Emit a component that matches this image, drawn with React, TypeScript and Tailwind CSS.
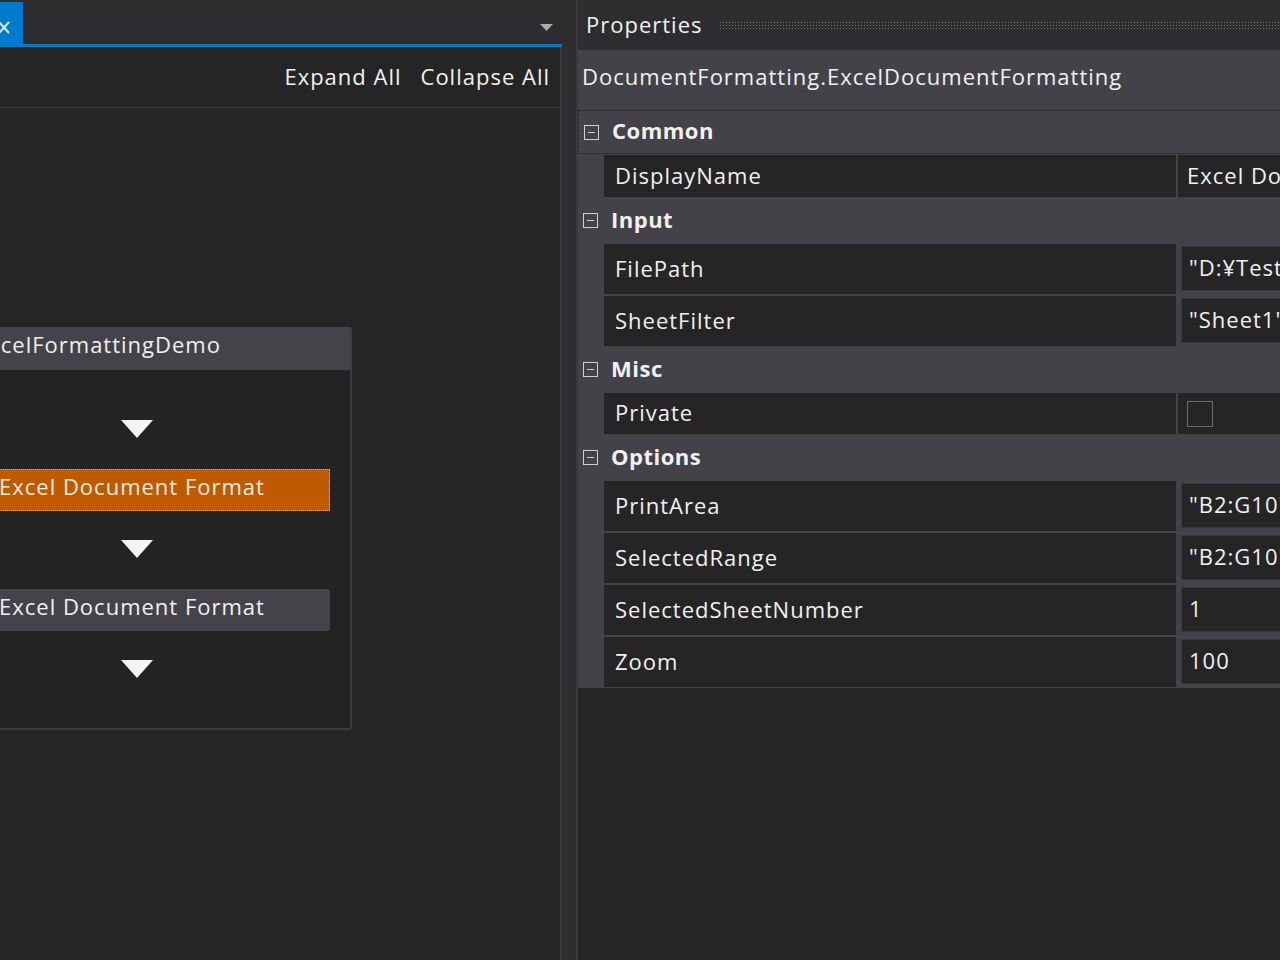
import React from 'react';

type PropKind = 'text' | 'box' | 'check';

interface PropItem {
    name: string;
    value?: string;
    kind: PropKind;
}

interface Category {
    title: string;
    focused?: boolean;
    height: string;
    props: PropItem[];
}

const categories: Category[] = [
    {
        title: 'Common',
        focused: true,
        height: 'h-[44px]',
        props: [{ name: 'DisplayName', value: 'Excel Document Formatting', kind: 'text' }],
    },
    {
        title: 'Input',
        height: 'h-[45px]',
        props: [
            { name: 'FilePath', value: '"D:¥Test¥Sample.xlsx"', kind: 'box' },
            { name: 'SheetFilter', value: '"Sheet1"', kind: 'box' },
        ],
    },
    {
        title: 'Misc',
        height: 'h-[45px]',
        props: [{ name: 'Private', kind: 'check' }],
    },
    {
        title: 'Options',
        height: 'h-[45px]',
        props: [
            { name: 'PrintArea', value: '"B2:G10"', kind: 'box' },
            { name: 'SelectedRange', value: '"B2:G10"', kind: 'box' },
            { name: 'SelectedSheetNumber', value: '1', kind: 'box' },
            { name: 'Zoom', value: '100', kind: 'box' },
        ],
    },
];

const Arrow = () => (
    <svg width="32" height="18" viewBox="0 0 32 18" className="shrink-0">
        <polygon points="0,0 32,0 16,18" fill="#f4f4f4" />
    </svg>
);

const MinusBox = () => (
    <div className="w-[15px] h-[15px] border border-[#cfcfcf] flex items-center justify-center shrink-0">
        <div className="w-[7px] h-[1px] bg-[#cfcfcf]" />
    </div>
);

const PropertyRow: React.FC<{ item: PropItem }> = ({ item }) => {
    const rowHeight = item.kind === 'text' ? 'h-[44px]' : item.kind === 'check' ? 'h-[43px]' : 'h-[52px]';
    return (
        <div className={`flex ${rowHeight} pl-[26px] py-[1px] gap-[2px]`}>
            <div className="w-[572px] shrink-0 bg-[#252526] flex items-center pl-[11px] pb-[3px] text-[#f1f1f1]">
                {item.name}
            </div>
            {item.kind === 'text' && (
                <div className="flex-1 bg-[#252526] flex items-center pl-[9px] pb-[3px] text-[#f1f1f1] whitespace-nowrap overflow-hidden">
                    {item.value}
                </div>
            )}
            {item.kind === 'check' && (
                <div className="flex-1 bg-[#252526] flex items-center pl-[9px]">
                    <div className="w-[26px] h-[26px] border border-[#6b6b6b]" />
                </div>
            )}
            {item.kind === 'box' && (
                <div className="flex-1 pl-[3px] pt-[2px] pb-[3px] overflow-hidden">
                    <div className="h-full bg-[#252526] border border-r-0 border-[#38383c] flex items-center pl-[7px] pb-[3px] text-[#f1f1f1] whitespace-nowrap">
                        {item.value}
                    </div>
                </div>
            )}
        </div>
    );
};

export default function App() {
    return (
        <div className="w-[1280px] h-[960px] flex bg-[#2d2d30] overflow-hidden font-['Open_Sans',sans-serif] text-[22px] tracking-[1px] leading-none">
            {/* Workflow designer */}
            <div className="w-[562px] shrink-0 flex flex-col">
                <div className="h-[44px] flex items-end justify-between pr-[9px]">
                    <div className="w-[23px] h-[42px] bg-[#007acc] flex items-center">
                        <svg width="12" height="14" viewBox="0 0 12 14" className="mt-[9px]">
                            <line x1="-1" y1="1" x2="9" y2="12" stroke="#dbe9f6" strokeWidth="2" />
                            <line x1="9" y1="1" x2="-1" y2="12" stroke="#dbe9f6" strokeWidth="2" />
                        </svg>
                    </div>
                    <svg width="13" height="7" viewBox="0 0 13 7" className="mb-[13px]">
                        <polygon points="0,0 13,0 6.5,7" fill="#a9a9ad" />
                    </svg>
                </div>
                <div className="h-[3px] bg-[#007acc]" />
                <div className="h-[61px] bg-[#252526] border-r-2 border-b border-[#3a3a3d] flex items-center justify-end gap-[19px] pr-[10px] pb-[3px] text-[#f1f1f1]">
                    <span>Expand All</span>
                    <span>Collapse All</span>
                </div>
                <div className="flex-1 bg-[#252526] border-r-2 border-[#3a3a3d] overflow-hidden">
                    <div className="ml-[-76px] mt-[219px] w-[428px] border-r-2 border-b-2 border-[#3c3c40] rounded-[3px] bg-[#232324]">
                        <div className="h-[43px] bg-[#434349] flex items-center pl-[51px] pb-[10px] text-[#f1f1f1] whitespace-nowrap">
                            ExcelFormattingDemo
                        </div>
                        <div className="flex flex-col items-center pb-[50px]">
                            <div className="mt-[50px]"><Arrow /></div>
                            <div className="mt-[31px] w-[386px] h-[42px] bg-[#bf5a00] border border-dotted border-[#e8b088] flex items-center pl-[54px] pb-[8px] text-[#f4ece4] whitespace-nowrap">
                                Excel Document Format
                            </div>
                            <div className="mt-[29px]"><Arrow /></div>
                            <div className="mt-[31px] w-[386px] h-[42px] bg-[#434349] rounded-[3px] flex items-center pl-[55px] pb-[8px] text-[#f1f1f1] whitespace-nowrap">
                                Excel Document Format
                            </div>
                            <div className="mt-[29px]"><Arrow /></div>
                        </div>
                    </div>
                </div>
            </div>

            {/* splitter */}
            <div className="w-[14px] shrink-0 bg-[#2d2d30]" />

            {/* Properties panel */}
            <div className="flex-1 flex flex-col border-l-2 border-[#3a3a3d] min-w-0">
                <div className="h-[50px] shrink-0 flex items-center gap-[16px] pl-[8px] bg-[#2d2d30] text-[#f1f1f1]">
                    <span className="pb-[2px]">Properties</span>
                    <div className="flex-1 h-[9px] bg-[image:radial-gradient(circle,#77777b_0.8px,transparent_1px)] bg-size-[3px_3px]" />
                </div>
                <div className="h-[58px] shrink-0 bg-[#424248] flex items-center pl-[4px] pb-[6px] text-[#f1f1f1] whitespace-nowrap">
                    DocumentFormatting.ExcelDocumentFormatting
                </div>
                <div className="shrink-0 bg-[#424248] pt-[2px]">
                    {categories.map((cat) => (
                        <div key={cat.title}>
                            <div className={`${cat.height} flex items-center gap-[13px] pl-[5px] ${cat.focused ? 'border border-r-0 border-dotted border-[#1e1e1e]' : ''}`}>
                                <MinusBox />
                                <span className="font-bold text-[#f1f1f1] tracking-[0.5px] pb-[4px]">{cat.title}</span>
                            </div>
                            {cat.props.map((p) => (
                                <PropertyRow key={p.name} item={p} />
                            ))}
                        </div>
                    ))}
                </div>
                <div className="flex-1 bg-[#252526]" />
            </div>
        </div>
    );
}
